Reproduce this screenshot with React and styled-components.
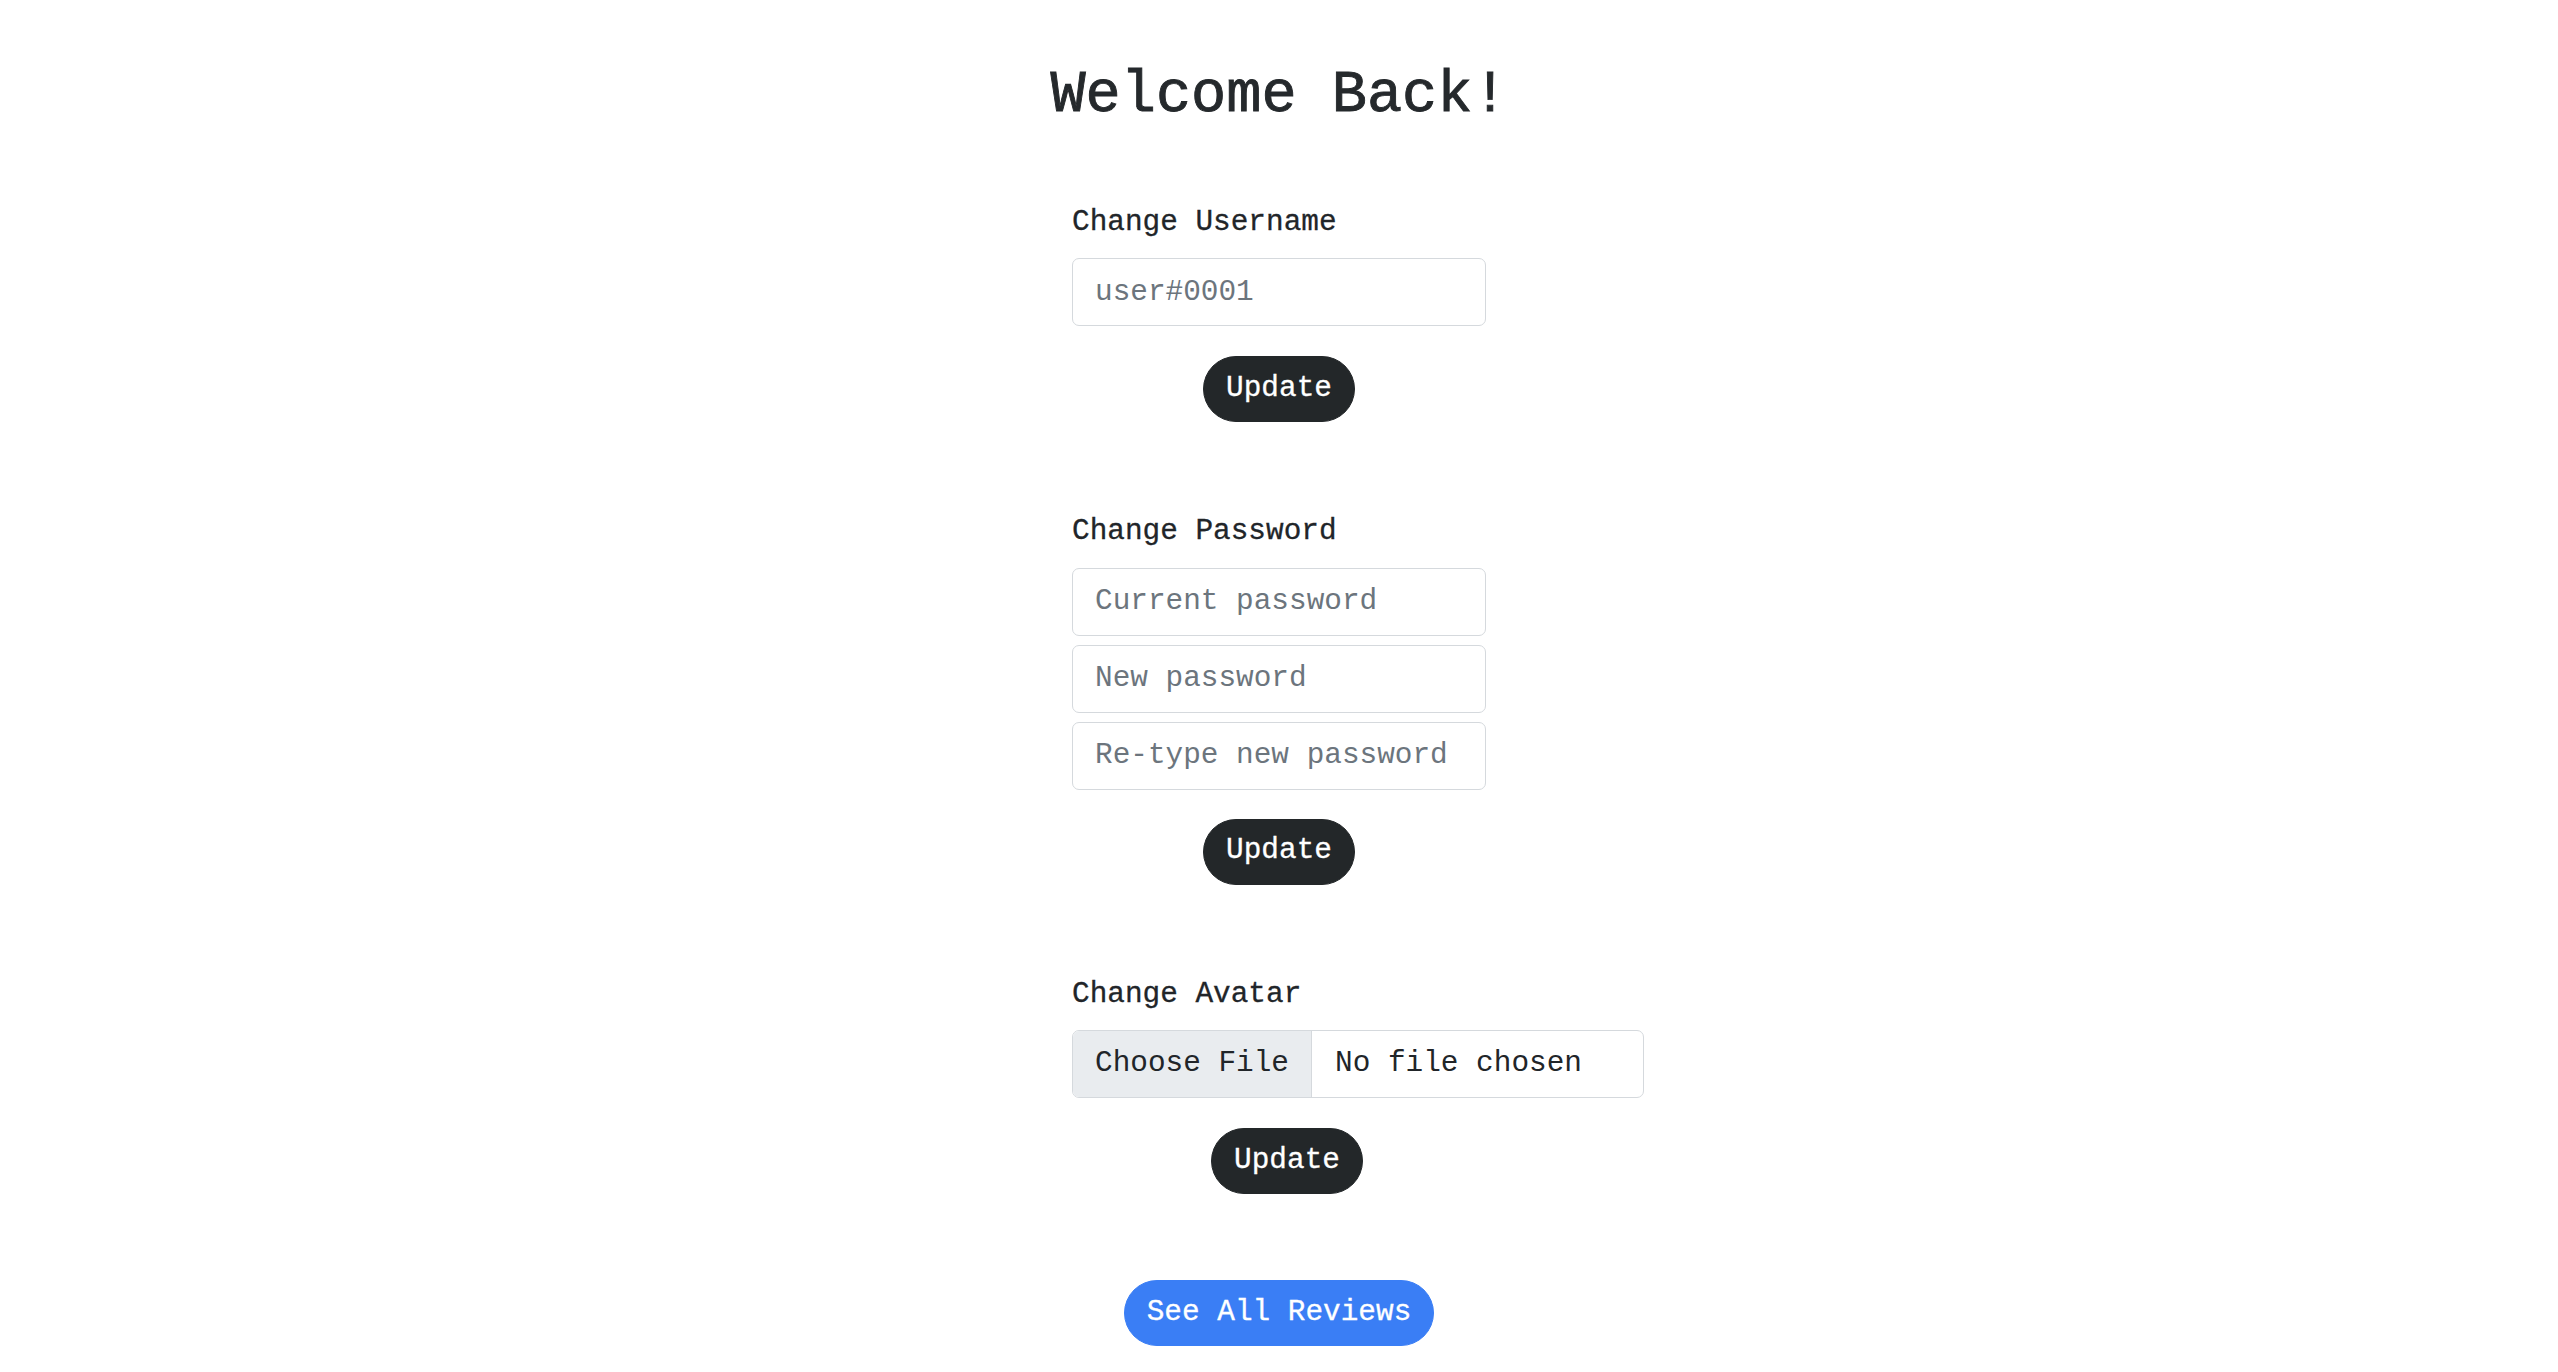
import * as React from 'react';
import styled, { createGlobalStyle } from 'styled-components';

const GlobalStyle = createGlobalStyle`
  html, body {
    margin: 0;
    padding: 0;
    background: #ffffff;
  }
  body {
    font-family: 'Liberation Mono', 'DejaVu Sans Mono', monospace;
    color: #212529;
  }
`;

//whole page column
const Page = styled.div`
  display: flex;
  flex-direction: column;
  align-items: center;
  padding-top: 61px;
  padding-bottom: 40px;
`;

const Heading = styled.h2`
  margin: 0 0 70px 0;
  font-family: 'Liberation Mono', monospace;
  font-size: 58.6px;
  line-height: 1.2;
  font-weight: 400;
  color: #25292c;
  text-align: center;
  -webkit-text-stroke: 0.9px #25292c;
`;

//column that holds the three forms
const Forms = styled.div`
  width: 414px;
  display: flex;
  flex-direction: column;
  align-items: flex-start;
  gap: 88px;
`;

const Section = styled.form`
  width: ${(p) => p.$width || 414}px;
  display: flex;
  flex-direction: column;
`;

const Label = styled.label`
  font-size: 29.4px;
  line-height: 1.5;
  margin-bottom: 13px;
  color: #212529;
  -webkit-text-stroke: 0.3px #212529;
`;

const TextInput = styled.input`
  box-sizing: border-box;
  width: 414px;
  height: 68px;
  margin: 0;
  margin-top: ${(p) => (p.$stacked ? '9px' : '0')};
  padding: 10px 22px;
  font-family: 'Liberation Mono', monospace;
  font-size: 29.4px;
  line-height: 1.5;
  color: #212529;
  background: #fff;
  border: 1px solid #d5d9dd;
  border-radius: 7px;
  outline: none;

  &::placeholder {
    color: #6c757d;
    opacity: 1;
  }
`;

//fake file picker, grey button + file name
const FileBox = styled.label`
  box-sizing: border-box;
  width: 572px;
  height: 68px;
  display: flex;
  align-items: stretch;
  border: 1px solid #d5d9dd;
  border-radius: 7px;
  overflow: hidden;
  font-size: 29.4px;
  cursor: pointer;

  input {
    display: none;
  }
`;

const FileButton = styled.span`
  display: flex;
  align-items: center;
  padding: 0 22px;
  background: #e9ecef;
  border-right: 1px solid #d5d9dd;
  color: #212529;
`;

const FileName = styled.span`
  display: flex;
  align-items: center;
  padding: 0 23px;
  color: #212529;
`;

const ButtonRow = styled.div`
  width: 414px;
  display: flex;
  justify-content: center;
  margin-top: ${(p) => p.$gap || 30}px;
  padding-left: ${(p) => p.$shift || 0}px;
  box-sizing: border-box;
`;

const PillButton = styled.button`
  box-sizing: border-box;
  height: 66px;
  padding: 0 22px;
  font-family: 'Liberation Mono', monospace;
  font-size: 29.4px;
  line-height: 1.5;
  color: #ffffff;
  background: ${(p) => (p.$primary ? '#3a7ef5' : '#232729')};
  border: 1px solid ${(p) => (p.$primary ? '#3a7ef5' : '#232729')};
  border-radius: 50rem;
  cursor: pointer;
  -webkit-text-stroke: 0.3px #ffffff;
`;

const Footer = styled.div`
  display: flex;
  justify-content: center;
  margin-top: 86px;
`;

export default function App() {
  const [fileName, setFileName] = React.useState('');

  const stop = (event) => event.preventDefault();

  return (
    <>
      <GlobalStyle />
      <Page>
        <Heading>Welcome Back!</Heading>
        <Forms>
          <Section onSubmit={stop}>
            <Label htmlFor="username">Change Username</Label>
            <TextInput id="username" placeholder="user#0001" />
            <ButtonRow $gap={30}>
              <PillButton type="submit">Update</PillButton>
            </ButtonRow>
          </Section>

          <Section onSubmit={stop}>
            <Label htmlFor="current">Change Password</Label>
            <TextInput id="current" type="password" placeholder="Current password" />
            <TextInput $stacked type="password" placeholder="New password" />
            <TextInput $stacked type="password" placeholder="Re-type new password" />
            <ButtonRow $gap={29}>
              <PillButton type="submit">Update</PillButton>
            </ButtonRow>
          </Section>

          <Section onSubmit={stop} $width={572}>
            <Label htmlFor="avatar">Change Avatar</Label>
            <FileBox>
              <input
                id="avatar"
                type="file"
                onChange={(e) => setFileName(e.target.files[0] ? e.target.files[0].name : '')}
              />
              <FileButton>Choose File</FileButton>
              <FileName>{fileName || 'No file chosen'}</FileName>
            </FileBox>
            <ButtonRow $gap={30} $shift={16}>
              <PillButton type="submit">Update</PillButton>
            </ButtonRow>
          </Section>
        </Forms>
        <Footer>
          <PillButton $primary>See All Reviews</PillButton>
        </Footer>
      </Page>
    </>
  );
}
